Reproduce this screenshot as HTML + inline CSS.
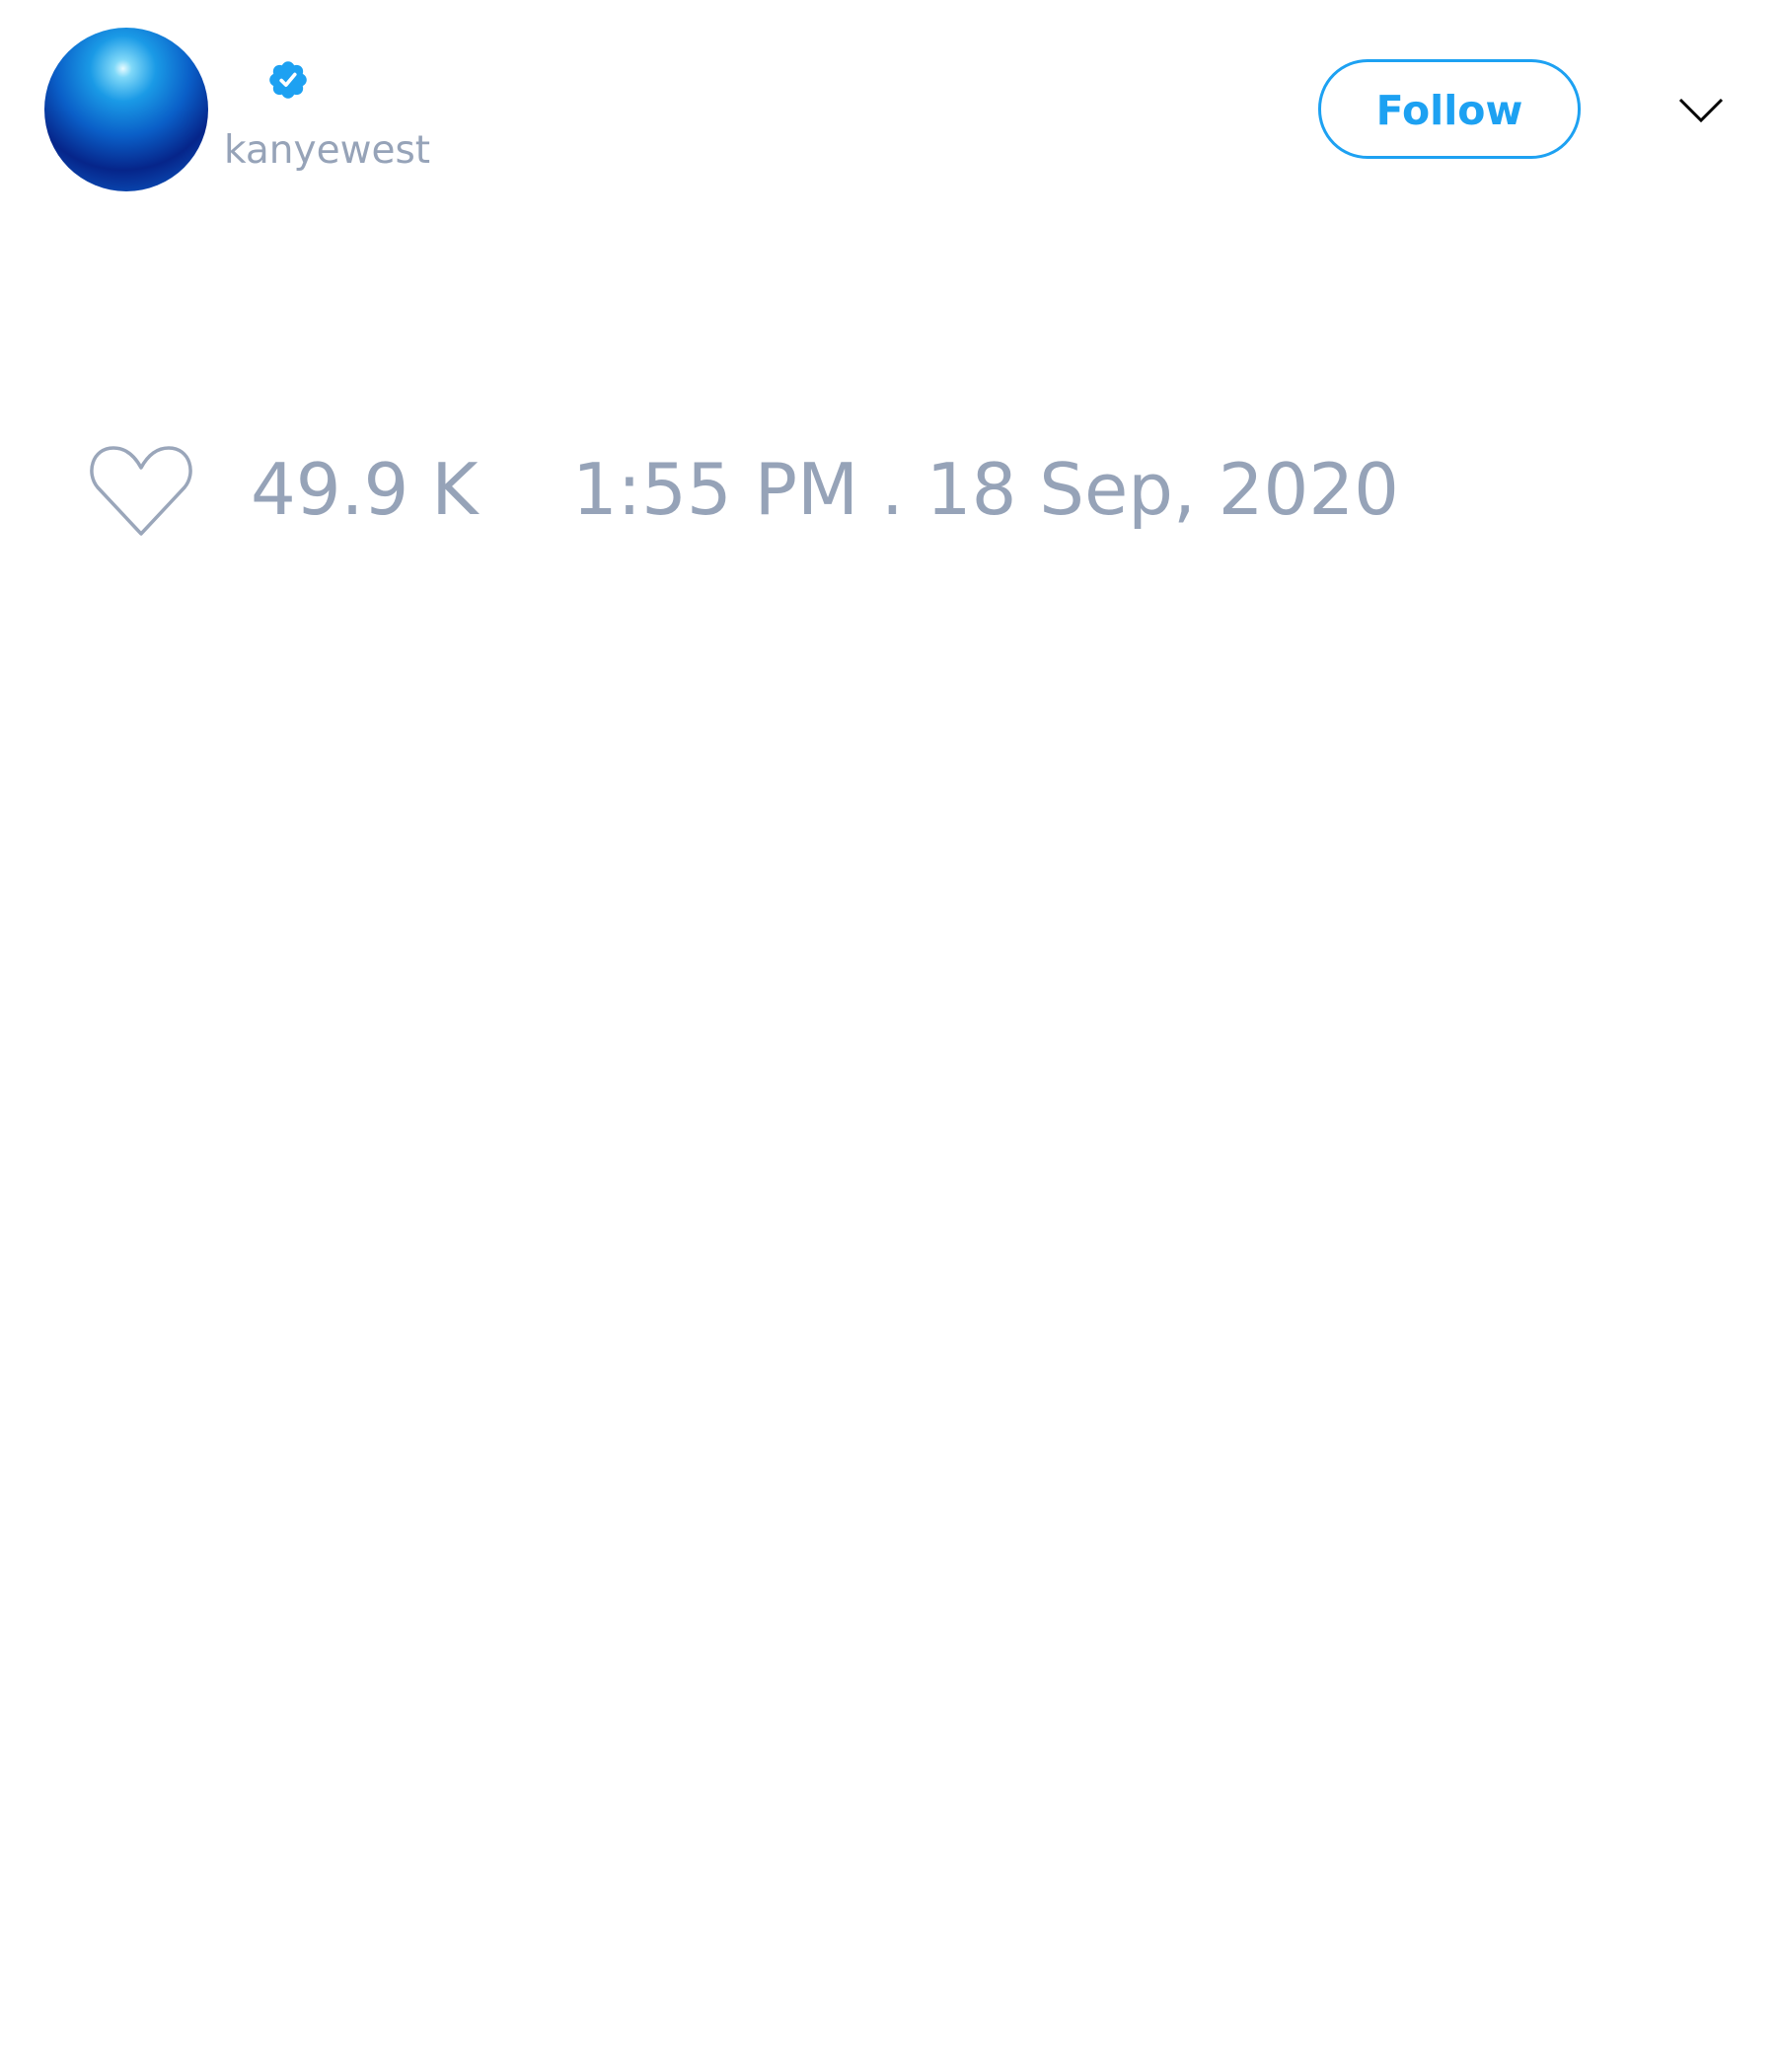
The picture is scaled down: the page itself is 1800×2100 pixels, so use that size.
<!DOCTYPE html>
<html><head><meta charset="utf-8"><style>
html,body{margin:0;padding:0;background:#fff;width:1800px;height:2100px;overflow:hidden;position:relative;font-family:"DejaVu Sans","Liberation Sans",sans-serif}
.a{position:absolute}
.av{left:45px;top:28px;width:166px;height:166px;border-radius:50%;background:radial-gradient(circle at 48% 25%,#e8fbff 0,#7fd8f8 6%,#1a9ae6 22%,#0a5fc8 45%,#06258a 68%,#0a4fb8 88%,#2aa8e8 100%)}
.nm{left:227px;top:133px;font-size:39px;color:#96a3b8;line-height:1;white-space:nowrap}
.btn{left:1336px;top:60px;width:260px;height:95px;border:3px solid #1da1f2;border-radius:50px;color:#1da1f2;font-weight:bold;font-size:41px;line-height:99px;text-align:center}
.t{font-size:72px;color:#96a3b8;line-height:1;white-space:nowrap;top:460px}
</style></head><body>
<div class="a av"></div>
<svg class="a" style="left:270px;top:59px" width="44" height="44" viewBox="0 0 24 24"><path fill="#1da1f2" d="M22.25 12c0-1.430-.88-2.67-2.190-3.34.46-1.39.2-2.9-.81-3.91s-2.52-1.270-3.910-.81c-.66-1.31-1.910-2.190-3.340-2.190s-2.670.88-3.330 2.190c-1.4-.46-2.910-.2-3.920.81s-1.260 2.520-.8 3.910c-1.310.67-2.200 1.910-2.200 3.340s.89 2.670 2.200 3.340c-.46 1.390-.21 2.900.8 3.910s2.520 1.260 3.910.81c.67 1.310 1.910 2.190 3.340 2.190s2.680-.88 3.340-2.190c1.390.45 2.900.2 3.910-.81s1.270-2.520.81-3.910c1.310-.67 2.190-1.910 2.190-3.340z"/><path fill="none" stroke="#fff" stroke-width="2" stroke-linecap="round" stroke-linejoin="round" d="M8.3 12.3l2.5 2.5 4.9-5.8"/></svg>
<div class="a nm">kanyewest</div>
<div class="a btn">Follow</div>
<svg class="a" style="left:1700px;top:98px" width="48" height="28" viewBox="0 0 48 28"><path d="M3 3l21 21 21-21" fill="none" stroke="#000" stroke-width="3"/></svg>
<svg class="a" style="left:90px;top:450px" width="106" height="94" viewBox="0 0 106 94"><path d="M53 91L9 44C-3 30 3 4 25 4c13 0 22 9 28 20C59 13 68 4 81 4c22 0 28 26 16 40z" fill="none" stroke="#9aa6ba" stroke-width="3.5" stroke-linejoin="round"/></svg>
<div class="a t" style="left:254px">49.9 K</div>
<div class="a t" style="left:580px">1:55 PM . 18 Sep, 2020</div>
</body></html>
